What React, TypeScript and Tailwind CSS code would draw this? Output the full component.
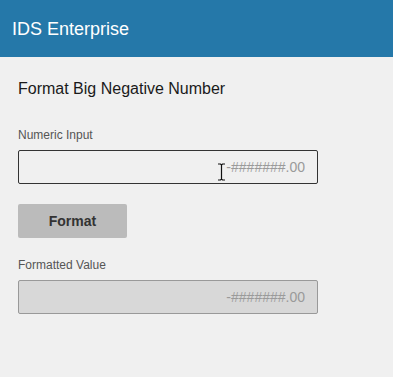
import React from 'react';

export default function App() {
  return (
    <div
      className="min-h-[377px] bg-[#f0f0f0] text-[#1a1a1a]"
      style={{ fontFamily: '"Liberation Sans", Arial, sans-serif' }}
    >
      {/* Header */}
      <header className="h-[57px] bg-[#2578a9] flex items-center px-3">
        <h1 className="text-[18px] text-white leading-none">IDS Enterprise</h1>
      </header>

      <main className="px-[18px] pt-[22px]">
        <h2 className="text-[16px] leading-[20px] text-[#1a1a1a]">Format Big Negative Number</h2>

        <label className="block mt-[29px] text-[12px] leading-[14px] text-[#555555]">Numeric Input</label>
        <div className="relative mt-[8px] w-[300px]">
          <input
            className="w-full h-[34px] border border-[#333333] rounded-[2px] bg-[#f0f0f0] px-3 text-right text-[14px] text-[#1a1a1a] placeholder:text-[#9a9a9a] outline-none"
            placeholder="-#######.00"
          />
          {/* mouse I-beam cursor */}
          <svg className="absolute left-[199px] top-[13px]" width="9" height="18" viewBox="0 0 9 18">
            <path d="M1 1h2.5L4.5 2l1-1H8M4.5 2v14M1 17h2.5l1-1 1 1H8" fill="none" stroke="#111" strokeWidth="1.2" />
          </svg>
        </div>

        <button className="mt-[20px] w-[109px] h-[34px] rounded-[2px] bg-[#bbbbbb] text-[14px] font-bold text-[#333333]">
          Format
        </button>

        <label className="block mt-[20px] text-[12px] leading-[14px] text-[#555555]">Formatted Value</label>
        <div className="mt-[8px] w-[300px] h-[34px] border border-[#999999] rounded-[2px] bg-[#d8d8d8] px-3 flex items-center justify-end text-[14px] text-[#9a9a9a]">
          -#######.00
        </div>
      </main>
    </div>
  );
}
